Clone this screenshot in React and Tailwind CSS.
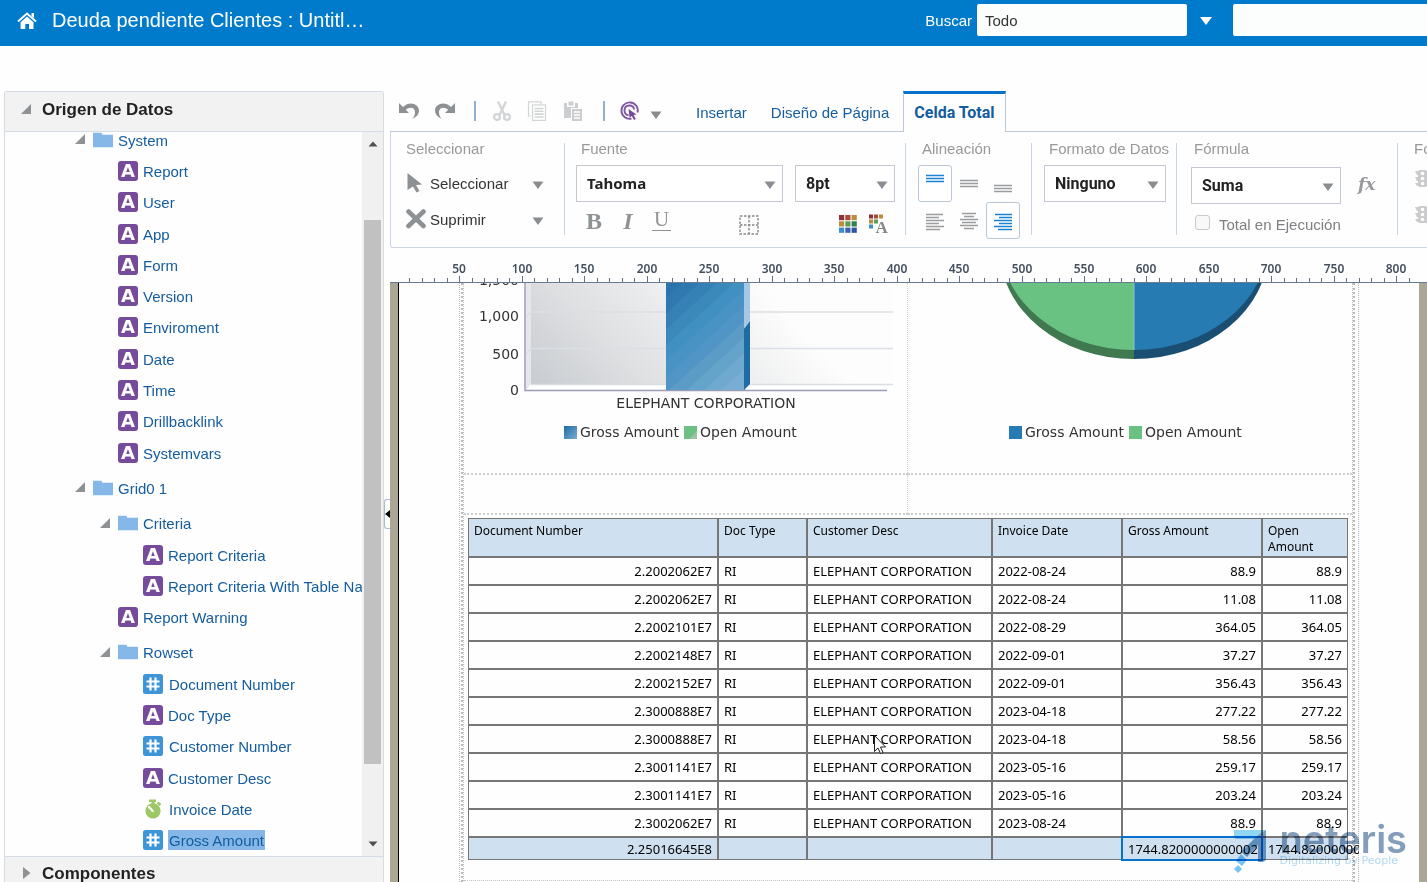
import React from "react";

const tree = [
  { kind: "folder", level: 1, label: "System" },
  { kind: "text", level: 2, label: "Report" },
  { kind: "text", level: 2, label: "User" },
  { kind: "text", level: 2, label: "App" },
  { kind: "text", level: 2, label: "Form" },
  { kind: "text", level: 2, label: "Version" },
  { kind: "text", level: 2, label: "Enviroment" },
  { kind: "text", level: 2, label: "Date" },
  { kind: "text", level: 2, label: "Time" },
  { kind: "text", level: 2, label: "Drillbacklink" },
  { kind: "text", level: 2, label: "Systemvars" },
  { kind: "folder", level: 1, label: "Grid0 1" },
  { kind: "folder", level: 2, label: "Criteria" },
  { kind: "text", level: 3, label: "Report Criteria" },
  { kind: "text", level: 3, label: "Report Criteria With Table Na" },
  { kind: "text", level: 2, label: "Report Warning" },
  { kind: "folder", level: 2, label: "Rowset" },
  { kind: "number", level: 3, label: "Document Number" },
  { kind: "text", level: 3, label: "Doc Type" },
  { kind: "number", level: 3, label: "Customer Number" },
  { kind: "text", level: 3, label: "Customer Desc" },
  { kind: "date", level: 3, label: "Invoice Date" },
  { kind: "number", level: 3, label: "Gross Amount", selected: true },
];

const folderIndent = { 1: "pl-[70px]", 2: "pl-[95px]" };
const leafIndent = { 2: "pl-[113px]", 3: "pl-[138px]" };

const rows = [
  ["2.2002062E7", "2022-08-24", "88.9"],
  ["2.2002062E7", "2022-08-24", "11.08"],
  ["2.2002101E7", "2022-08-29", "364.05"],
  ["2.2002148E7", "2022-09-01", "37.27"],
  ["2.2002152E7", "2022-09-01", "356.43"],
  ["2.3000888E7", "2023-04-18", "277.22"],
  ["2.3000888E7", "2023-04-18", "58.56"],
  ["2.3001141E7", "2023-05-16", "259.17"],
  ["2.3001141E7", "2023-05-16", "203.24"],
  ["2.3002062E7", "2023-08-24", "88.9"],
];

function Caret({ className = "" }) {
  return (
    <svg className={"shrink-0 " + className} width="12" height="9" viewBox="0 0 12 9" aria-hidden="true">
      <path d="M0.5 0.5H11.5L6 8Z" fill="#8a8d90" />
    </svg>
  );
}

function OpenToggle() {
  return (
    <svg className="shrink-0" width="11" height="11" viewBox="0 0 11 11" aria-hidden="true">
      <path d="M10 0V10H0Z" fill="#8f9294" />
    </svg>
  );
}

function KindIcon({ kind }) {
  if (kind === "folder")
    return (
      <svg className="shrink-0" width="20" height="16" viewBox="0 0 20 16" aria-hidden="true">
        <path d="M0 0.8H8.5L9.3 2.8H20V15.3H0Z" fill="#85b8e8" />
      </svg>
    );
  if (kind === "text")
    return (
      <span
        aria-hidden="true"
        className="flex size-5 shrink-0 items-center justify-center rounded-[3px] bg-[#774b9b] font-['DejaVu_Sans',sans-serif] text-[18px] leading-5 font-bold text-white"
      >
        A
      </span>
    );
  if (kind === "number")
    return (
      <svg className="shrink-0" width="20" height="20" viewBox="0 0 20 20" aria-hidden="true">
        <rect width="20" height="20" rx="2.5" fill="#3d94d6" />
        <path d="M7.5 3.500V16.500M12.500 3.500V16.500M3.500 7.500H16.500M3.500 12.500H16.500" stroke="#fff" strokeWidth="2.2" />
      </svg>
    );
  return (
    <svg className="shrink-0" width="20" height="20" viewBox="0 0 20 20" aria-hidden="true">
      <path d="M6 0.5H13V3H11.5V5H8.5V3H6Z" fill="#9cc765" />
      <circle cx="10" cy="11.8" r="7.6" fill="#9cc765" />
      <path d="M14.5 3.5L17.5 6" stroke="#9cc765" strokeWidth="2.4" />
      <path d="M6 8L9.8 12" stroke="#fff" strokeWidth="2.4" strokeLinecap="round" />
    </svg>
  );
}

function TreeRow({ item, first }) {
  const folder = item.kind === "folder";
  const size = first ? "basis-[31px]" : folder ? "basis-[35px] pt-1" : "basis-[31px]";
  const indent = folder ? folderIndent[item.level] : leafIndent[item.level];
  const gap = item.kind === "number" || item.kind === "date" ? "ml-[5px]" : "ml-1";
  return (
    <li className={"flex shrink-0 grow items-center " + size + " " + indent}>
      {folder && (
        <button type="button" aria-label={"Contraer " + item.label} className="mr-[7px]">
          <OpenToggle />
        </button>
      )}
      <KindIcon kind={item.kind} />
      <a
        href="#"
        className={gap + " px-px pt-0.5 leading-[18px] whitespace-nowrap " + (item.selected ? "bg-[#85b8e8]" : "")}
      >
        {item.label}
      </a>
    </li>
  );
}

function Sidebar() {
  return (
    <aside className="ml-1 flex w-[380px] shrink-0 flex-col rounded-t-[3px] border border-b-0 border-[#d6dce6]">
      <h2 className="flex h-[39px] shrink-0 items-center bg-[#f2f2f2] pb-1 pl-4">
        <OpenToggle />
        <button type="button" className="ml-[10px] text-[17px] font-bold text-[#222]">
          Origen de Datos
        </button>
      </h2>
      <div className="flex min-h-0 flex-1 overflow-hidden border-t border-[#d6dce6]">
        <ul className="-mt-2 flex min-w-0 flex-1 flex-col overflow-hidden text-[15px] text-[#145c9e]">
          {tree.map((item, i) => (
            <TreeRow key={item.label} item={item} first={i === 0} />
          ))}
        </ul>
        <div className="flex w-[21px] shrink-0 flex-col items-center bg-[#f0f0f0] py-[9px]">
          <svg width="10" height="6" viewBox="0 0 10 6" aria-hidden="true">
            <path d="M5 0.5L9.5 5.5H0.5Z" fill="#505050" />
          </svg>
          <div className="mt-[73px] mb-[77px] w-[17px] flex-1 bg-[#c1c1c1]" />
          <svg width="10" height="6" viewBox="0 0 10 6" aria-hidden="true">
            <path d="M5 5.5L9.5 0.5H0.5Z" fill="#505050" />
          </svg>
        </div>
      </div>
      <h2 className="flex h-[26px] shrink-0 items-start border-t border-[#d6dce6] bg-[#f2f2f2] pl-[18px]">
        <svg className="mt-[10px]" width="8" height="12" viewBox="0 0 8 12" aria-hidden="true">
          <path d="M0 0L7.5 6L0 12Z" fill="#8f9294" />
        </svg>
        <button type="button" className="mt-[5px] ml-[11px] text-[17px] leading-6 font-bold text-[#222]">
          Componentes
        </button>
      </h2>
    </aside>
  );
}

function IconButton({ label, className = "", children }) {
  return (
    <button type="button" aria-label={label} className={"flex shrink-0 items-center justify-center " + className}>
      {children}
    </button>
  );
}

const undoPath =
  "M0 2L0 12H10L6.8 8.8C10.5 5.6 16 6 16 11.2C16 13.8 15 16 13.2 18C17.6 16 20 13.2 20 9.8C20 3 10.5 -0.6 4 6Z";

function TopBar() {
  return (
    <div className="flex h-[41px] shrink-0 items-end text-[15px] text-[#145c9e]">
      <div className="flex min-w-0 flex-1 self-stretch border-b border-[#bcc8d6]">
        <div className="flex h-10 items-center pl-[9px]">
          <IconButton label="Deshacer">
            <svg width="20" height="20" viewBox="0 0 20 20"><path d={undoPath} fill="#8d9194" /></svg>
          </IconButton>
          <IconButton label="Rehacer" className="ml-4">
            <svg width="20" height="20" viewBox="0 0 20 20">
              <path d={undoPath} fill="#8d9194" transform="matrix(-1 0 0 1 20 0)" />
            </svg>
          </IconButton>
          <span className="ml-[19px] h-5 w-0.5 bg-[#8fb0cf]" />
          <IconButton label="Cortar" className="ml-4">
            <svg width="20" height="20" viewBox="0 0 20 20" fill="none" stroke="#d3d5d6">
              <path d="M6 0.5L12.5 14M14 0.5L7.5 14" strokeWidth="2.4" />
              <circle cx="5" cy="16" r="2.9" strokeWidth="2.3" />
              <circle cx="15" cy="16" r="2.9" strokeWidth="2.3" />
            </svg>
          </IconButton>
          <IconButton label="Copiar" className="ml-[15px]">
            <svg width="20" height="20" viewBox="0 0 20 20" fill="none" stroke="#d3d5d6">
              <path d="M4 15H1.5V0.8H14V3.5" strokeWidth="1.2" />
              <rect x="5.5" y="4" width="13" height="15.4" strokeWidth="1.2" />
              <path d="M7.5 7.5H16.5M7.5 10.3H16.5M7.5 13.1H16.5M7.5 16H16.5" strokeWidth="1.6" />
            </svg>
          </IconButton>
          <IconButton label="Pegar" className="ml-4">
            <svg width="20" height="20" viewBox="0 0 20 20">
              <path d="M1 2H4V6H12V2H15V7H8V17H1Z" fill="#cbcdce" />
              <rect x="5.5" y="0.5" width="5" height="4" fill="#cbcdce" />
              <rect x="9" y="8" width="10" height="12" fill="#cbcdce" />
              <path d="M11 11H17M11 14H17M11 17H17" stroke="#fff" strokeWidth="1.3" />
            </svg>
          </IconButton>
          <span className="ml-5 h-5 w-0.5 bg-[#8fb0cf]" />
          <IconButton label="Interactividad" className="ml-[15px]">
            <svg width="20" height="20" viewBox="0 0 20 20" fill="none" stroke="#8156a3">
              <path d="M11.500 17.600A8.2 8.2 0 1 1 17.6 11.500" strokeWidth="1.9" />
              <path d="M8.500 14.200A4.9 4.9 0 1 1 14.200 8.500" strokeWidth="1.9" />
              <path d="M8.500 8L16.500 13.500L13.6 14L15.8 18L14 19L11.8 15L9.6 17Z" fill="#774b9b" stroke="none" />
            </svg>
          </IconButton>
          <IconButton label="Opciones" className="mt-2 ml-[10px]">
            <Caret />
          </IconButton>
          <a href="#" className="mt-1 ml-[34px]">Insertar</a>
          <a href="#" className="mt-1 ml-6 whitespace-nowrap">Diseño de Página</a>
          <a
            href="#"
            className="z-10 ml-[14px] flex h-[41px] items-center self-start border-x border-t-[3px] border-x-[#bcc8d6] border-t-[#0572ce] bg-[#fefefe] px-[10px] font-[Roboto,sans-serif] text-base font-bold whitespace-nowrap"
          >
            Celda Total
          </a>
        </div>
      </div>
    </div>
  );
}

function Select({ label, value, className }) {
  return (
    <span className={"relative flex h-[37px] shrink-0 " + className}>
      <select
        aria-label={label}
        defaultValue={value}
        className="w-full appearance-none border border-[#c4c8d4] bg-white pl-[10px] font-bold text-[#222] outline-none"
      >
        <option>{value}</option>
      </select>
      <Caret className="pointer-events-none absolute top-4 right-[7px]" />
    </span>
  );
}

function Group({ label, labelClass, className = "", children }) {
  return (
    <section className={"shrink-0 " + className}>
      <h3 className={"mb-[10px] h-3 leading-3 whitespace-nowrap text-[#999] " + labelClass}>{label}</h3>
      {children}
    </section>
  );
}

function Divider() {
  return <div className="mb-3 w-px shrink-0 bg-[#c9d4e2]" />;
}

function AlignButton({ label, active, lines }) {
  return (
    <button
      type="button"
      aria-label={label}
      className={
        "flex h-[37px] w-[34px] items-center justify-center rounded-[3px] border " +
        (active ? "border-[#b9c6d3] bg-white" : "border-transparent")
      }
    >
      <svg width="18" height="20" viewBox="0 0 18 20" fill="none" strokeWidth="1.5" stroke={active ? "#1b82d2" : "#9a9d9f"}>
        <path d={lines} />
      </svg>
    </button>
  );
}

function ListButton({ icon, label }) {
  return (
    <div className="flex h-9 items-center">
      <button type="button" className="flex flex-1 items-center gap-1 text-[#333]">
        {icon}
        <span className="pt-0.5">{label}</span>
      </button>
      <button type="button" aria-label={label + ": opciones"} className="mt-1 mr-5">
        <Caret />
      </button>
    </div>
  );
}

const swatches = [
  ["#8e3037", "#a94a36", "#b98d3c"],
  ["#b98d3c", "#5f9a58", "#2f7f4f"],
  ["#3a8fc8", "#3a62b0", "#2f54a0"],
];

function TrafficLight({ gear }) {
  return (
    <svg width="20" height="20" viewBox="0 0 20 20" fill="#c9cbcc" aria-hidden="true">
      <path d="M1 2H5V6H3ZM1 8H5V12H3ZM1 14H5V17H3ZM12 2H16L14 6H12ZM12 8H16L14 12H12ZM12 14H16L14 17H12Z" />
      <rect x="4" y="1" width="9" height="17" rx="2" />
      <g fill="#fff">
        <circle cx="8.5" cy="4.5" r="1.8" />
        <circle cx="8.5" cy="9.5" r="1.8" />
        <circle cx="8.5" cy="14.5" r="1.8" />
      </g>
      {gear && <circle cx="15" cy="15" r="3" fill="none" stroke="#c9cbcc" strokeWidth="2" />}
    </svg>
  );
}

function Ribbon() {
  return (
    <div className="flex h-[116px] shrink-0 overflow-hidden rounded-bl-[3px] border-b border-l border-[#ccd6e4] pt-[11px] text-[15px]">
      <Group label="Seleccionar" labelClass="" className="w-[173px] pl-[15px]">
        <ListButton
          label="Seleccionar"
          icon={
            <svg width="20" height="20" viewBox="0 0 20 20" aria-hidden="true">
              <path d="M1.5 0L16 11.5L10 12L13.5 18L10.5 19.5L7 13.5L1.5 17Z" fill="#8d9194" />
            </svg>
          }
        />
        <ListButton
          label="Suprimir"
          icon={
            <svg width="20" height="20" viewBox="0 0 20 20" aria-hidden="true">
              <path d="M2.5 2.5L17.5 17M17.5 2.5L2.5 17" stroke="#8d9194" strokeWidth="4.6" strokeLinecap="round" />
            </svg>
          }
        />
      </Group>
      <Divider />
      <Group label="Fuente" labelClass="pl-[5px]" className="w-[340px] pl-[11px]">
        <div className="flex gap-3">
          <Select label="Fuente" value="Tahoma" className="w-[207px] font-['Noto_Sans',sans-serif]" />
          <Select label="Tamaño" value="8pt" className="w-[100px] font-[Roboto,sans-serif] text-base" />
        </div>
        <div className="flex h-[38px] items-center pl-2 font-['Liberation_Serif',serif] text-2xl leading-6 text-[#909396]">
          <IconButton label="Negrita" className="w-5"><b>B</b></IconButton>
          <IconButton label="Cursiva" className="ml-[14px] w-5"><b className="italic">I</b></IconButton>
          <IconButton label="Subrayado" className="ml-[14px] w-[19px] border-b border-[#909396] text-[21px]">
            <span className="h-[19px] leading-[17px]">U</span>
          </IconButton>
          <IconButton label="Bordes" className="mt-[7px] ml-[68px]">
            <svg width="20" height="20" viewBox="0 0 20 20" fill="none" stroke="#85888b" strokeWidth="1.4" strokeDasharray="2.5 1.5">
              <rect x="1" y="1" width="18" height="18" />
              <path d="M10 1V19M1 10H19" />
            </svg>
          </IconButton>
          <IconButton label="Color de fondo" className="mt-[5px] ml-20">
            <svg width="18" height="18" viewBox="0 0 18 18">
              {swatches.map((line, y) =>
                line.map((c, x) => <rect key={x + "-" + y} x={x * 6.3} y={y * 6.3} width="5.2" height="5.2" fill={c} />)
              )}
            </svg>
          </IconButton>
          <IconButton label="Color de texto" className="mt-[5px] ml-3">
            <svg width="19" height="19" viewBox="0 0 19 19">
              {swatches.map((line, y) =>
                line
                  .filter((c, x) => x + y < 3)
                  .map((c, x) => <rect key={x + "-" + y} x={x * 5} y={0.5 + y * 5} width="4" height="4" fill={c} />)
              )}
              <text x="6.500" y="18.500" fontSize="17" fontWeight="bold" fontFamily="Liberation Serif, serif" fill="#85888b" stroke="#fff" strokeWidth="2" paintOrder="stroke">
                A
              </text>
            </svg>
          </IconButton>
        </div>
      </Group>
      <Divider />
      <Group label="Alineación" labelClass="pl-1" className="w-[125px] pl-[12px]">
        <div className="flex">
          <AlignButton label="Arriba" active lines="M0 1.500H18M0 4.500H18M0 7.500H18" />
          <AlignButton label="Medio" lines="M0 6.500H18M0 9.500H18M0 12.500H18" />
          <AlignButton label="Abajo" lines="M0 11.500H18M0 14.500H18M0 17.500H18" />
        </div>
        <div className="flex">
          <AlignButton label="Izquierda" lines="M0 3.500H17M0 6.500H13M0 9.500H18M0 12.500H13M0 15.500H18M0 18.500H14" />
          <AlignButton label="Centro" lines="M2 2.500H16M4 5.500H14M0 8.500H18M2 11.500H16M0 14.500H18M4 17.500H14" />
          <AlignButton label="Derecha" active lines="M1 3.500H18M5 6.500H18M0 9.500H18M5 12.500H18M0 15.500H18M4 18.500H18" />
        </div>
      </Group>
      <Divider />
      <Group label="Formato de Datos" labelClass="pl-[5px]" className="w-[144px] pl-[12px]">
        <Select label="Formato de Datos" value="Ninguno" className="w-[122px] font-[Roboto,sans-serif] text-base" />
      </Group>
      <Divider />
      <Group label="Fórmula" labelClass="pl-[3px]" className="w-[220px] pl-[14px]">
        <div className="mt-3 flex items-center">
          <Select label="Fórmula" value="Suma" className="w-[150px] font-[Roboto,sans-serif] text-base" />
          <button
            type="button"
            aria-label="Editor de fórmulas"
            className="ml-[17px] pb-1 font-['DejaVu_Serif',serif] text-[17px] leading-6 font-bold text-[#97999c] italic"
          >
            fx
          </button>
        </div>
        <label className="mt-[9px] flex items-center gap-[9px] pl-1 leading-5 whitespace-nowrap text-[#7d7f82]">
          <input
            type="checkbox"
            className="mb-1 size-[15px] shrink-0 appearance-none rounded-[3px] border border-[#c9c9c9] bg-[#f8f8f8]"
          />
          <span className="pt-0.5">Total en Ejecución</span>
        </label>
      </Group>
      <Divider />
      <Group label="Formato Condicional" labelClass="" className="w-[160px] pl-[16px]">
        <button type="button" aria-label="Resaltar" className="mt-[14px] block"><TrafficLight /></button>
        <button type="button" aria-label="Gestionar formatos" className="mt-4 block"><TrafficLight gear /></button>
      </Group>
    </div>
  );
}

function Ruler() {
  const ticks = Array.from({ length: 81 }, (_, i) => (i + 1) * 10);
  return (
    <svg className="block h-[35px] w-full shrink-0" aria-hidden="true">
      {ticks.map((t) => {
        const x = Math.round(7 + t * 1.249);
        const major = t % 50 === 0;
        return (
          <g key={t}>
            <rect x={x} y={major ? 28 : 30} width="1" height={major ? 6 : 4} fill="#5f6f86" />
            {major && (
              <text x={x} y="25" textAnchor="middle" fontSize="12" fontWeight="600" fontFamily="Noto Sans, sans-serif" fill="#45505f">
                {t}
              </text>
            )}
          </g>
        );
      })}
      <rect x="0" y="34" width="100%" height="1" fill="#6b7a93" />
    </svg>
  );
}

const chartText = { fontFamily: "DejaVu Sans, sans-serif", fontSize: 14, fill: "#333" };

function BarChart() {
  const bands = ["#1f6ba3", "#2974aa", "#3079b0", "#3580b5", "#3b88bb", "#4190c2", "#4893c3", "#5095c6", "#5a9cc6", "#65a4ca", "#70a9cf", "#7aadd3"];
  return (
    <svg width="440" height="191" viewBox="0 0 440 191" role="img" aria-label="Gross Amount y Open Amount por cliente">
      <defs>
        <linearGradient id="wall" gradientUnits="userSpaceOnUse" x1="66" y1="101" x2="240" y2="-60">
          <stop offset="0" stopColor="#c8cbd0" />
          <stop offset="0.35" stopColor="#dddfe1" />
          <stop offset="1" stopColor="#fdfdfd" />
        </linearGradient>
        <linearGradient id="bar" gradientUnits="userSpaceOnUse" x1="195" y1="-10" x2="290" y2="94">
          {bands.map((c, i) => [
            <stop key={i + "a"} offset={i / 12} stopColor={c} />,
            <stop key={i + "b"} offset={(i + 0.9) / 12} stopColor={c} />,
          ])}
        </linearGradient>
        <linearGradient id="barKey" x1="0" y1="0" x2="1" y2="1">
          <stop offset="0" stopColor="#1f6ba3" />
          <stop offset="1" stopColor="#7aadd3" />
        </linearGradient>
      </defs>
      <path d="M67 0H429V101H67Z" fill="url(#wall)" />
      <path d="M62 0H67V101L62 107Z" fill="#e6e7ea" />
      <g fill="none" stroke="#dcdee6" strokeWidth="1.400">
        <path d="M62 34.500L67 29H429M62 71L67 65.500H429M67 101.500H429" />
      </g>
      <path d="M61 0V107.500H423" fill="none" stroke="#9c9cb8" strokeWidth="1.500" />
      <rect x="202" y="0" width="79" height="107" fill="url(#bar)" />
      <path d="M280 0H286V38L280 46Z" fill="#a6c8e6" />
      <path d="M280 46L286 38V101L280 107Z" fill="#1f6ba3" />
      <g {...chartText} textAnchor="end">
        <text x="55" y="2">1,500</text>
        <text x="55" y="38">1,000</text>
        <text x="55" y="76">500</text>
        <text x="55" y="112">0</text>
      </g>
      <text {...chartText} x="242" y="125" textAnchor="middle">ELEPHANT CORPORATION</text>
      <rect x="100" y="143" width="13" height="13" fill="url(#barKey)" />
      <text {...chartText} x="116" y="154">Gross Amount</text>
      <rect x="220" y="143" width="13" height="13" fill="#6cc084" />
      <path d="M233 148V156H225Z" fill="#9bc3a8" />
      <text {...chartText} x="236" y="154">Open Amount</text>
    </svg>
  );
}

function PieChart() {
  return (
    <svg width="440" height="191" viewBox="0 0 440 191" role="img" aria-label="Gross Amount y Open Amount">
      <path d="M92 -33A134 109 0 0 0 226 76V-33Z" fill="#40784f" />
      <path d="M360 -33A134 109 0 0 1 226 76V-33Z" fill="#1a4e72" />
      <path d="M92 -42A134 109 0 0 0 226 67V-42Z" fill="#69c182" />
      <path d="M360 -42A134 109 0 0 1 226 67V-42Z" fill="#267bb3" />
      <path d="M226 0V67" stroke="#8fc6c4" />
      <rect x="101" y="143" width="13" height="13" fill="#267bb3" />
      <text {...chartText} x="117" y="154">Gross Amount</text>
      <rect x="221" y="143" width="13" height="13" fill="#69c182" />
      <text {...chartText} x="237" y="154">Open Amount</text>
    </svg>
  );
}

const cell = "border border-[#767676] px-[5px] py-0";
const shaded = cell + " bg-[#cfe0f0]";

function ReportTable() {
  return (
    <table className="w-full table-fixed border-separate border-spacing-0 font-['Noto_Sans',sans-serif] text-[13px] leading-4 text-black">
      <colgroup>
        <col className="w-[250px]" />
        <col className="w-[89px]" />
        <col className="w-[185px]" />
        <col className="w-[130px]" />
        <col className="w-[140px]" />
        <col />
      </colgroup>
      <thead>
        <tr className="h-[39px] text-left align-top text-xs leading-4">
          {["Document Number", "Doc Type", "Customer Desc", "Invoice Date", "Gross Amount", "Open Amount"].map((h) => (
            <th key={h} className={shaded + " pt-1 leading-4 font-normal"}>{h}</th>
          ))}
        </tr>
      </thead>
      <tbody>
        {rows.map(([doc, date, amount], i) => (
          <tr key={i} className="h-7">
            <td className={cell + " text-right"}>{doc}</td>
            <td className={cell}>RI</td>
            <td className={cell + " whitespace-nowrap"}>ELEPHANT CORPORATION</td>
            <td className={cell}>{date}</td>
            <td className={cell + " text-right"}>{amount}</td>
            <td className={cell + " text-right"}>{amount}</td>
          </tr>
        ))}
      </tbody>
      <tfoot>
        <tr className="h-[23px]">
          <td className={shaded + " text-right"}>2.25016645E8</td>
          <td className={shaded} />
          <td className={shaded} />
          <td className={shaded} />
          <td className={shaded + " text-right outline-2 -outline-offset-1 outline-[#0572ce]"}>1744.8200000000002</td>
          <td className={shaded}>
            <div className="w-[91px] overflow-hidden">1744.82000000</div>
          </td>
        </tr>
      </tfoot>
    </table>
  );
}

function Watermark() {
  return (
    <div className="pointer-events-none absolute right-5 bottom-[9px] flex items-end gap-3 opacity-85 mix-blend-multiply">
      <svg width="33" height="43" viewBox="0 0 33 43" aria-hidden="true">
        <path d="M0 0H32L24 9H3Q0 9 0 6Z" fill="#7fd0f5" />
        <path d="M32 0V28Q32 32 28 32H24V15L13 27L7 22L24 5Z" fill="#5a92bf" />
        <path d="M7 24L13 30L8 36L2 31Z" fill="#5cbcf0" />
        <path d="M4 35L8 39L4 43L0 39Z" fill="#5cbcf0" />
      </svg>
      <div className="pb-[6px]">
        <div className="font-[Inter,sans-serif] text-[38px] leading-8 font-semibold text-[#6f8db0]">neteris</div>
        <div className="font-['DejaVu_Sans',sans-serif] text-[11px] leading-3 whitespace-nowrap text-[#a9d3ee]">
          Digitalizing by People
        </div>
      </div>
    </div>
  );
}

function Canvas() {
  return (
    <div className="relative min-h-0 flex-1 overflow-hidden bg-[#aba695] px-2">
      <div className="h-full border-l border-black bg-[#fefefe] px-[60px]">
        <div className="h-full border-x border-dotted border-[#b5b5b5] pr-[3px] pl-px">
          <div className="h-full border-x-2 border-dotted border-[#b8b8b8]">
            <div className="grid grid-cols-2 border-x border-dotted border-[#c4c4c4]">
              <div className="h-[192px] border-r border-b-2 border-dotted border-[#cfcfcf]"><BarChart /></div>
              <div className="h-[192px] border-b-2 border-dotted border-[#cfcfcf]"><PieChart /></div>
              <div className="h-10 border-r border-b-2 border-dotted border-[#cfcfcf]" />
              <div className="h-10 border-b-2 border-dotted border-[#cfcfcf]" />
              <div className="col-span-2 border-b border-dotted border-[#c4c4c4] px-1 pt-[3px] pb-5">
                <ReportTable />
              </div>
            </div>
          </div>
        </div>
      </div>
      <Watermark />
      <svg className="absolute top-[452px] left-[484px]" width="13" height="20" viewBox="0 0 13 20" aria-hidden="true">
        <path d="M0.500 0.500V16.500L4 13L6.500 18.500L9 17.500L6.500 12H11.500Z" fill="#fff" stroke="#222" />
      </svg>
    </div>
  );
}

function Header() {
  return (
    <header className="flex h-[46px] shrink-0 items-center bg-[#007bcb] pb-1.5 text-white">
      <a href="#" aria-label="Inicio" className="mt-0.5 ml-[17px]">
        <svg width="20" height="18" viewBox="0 0 20 18" aria-hidden="true">
          <path d="M1 9.500L10 1.500L19 9.500" fill="none" stroke="#fff" strokeWidth="1.900" />
          <path d="M14.500 1H17V6L14.500 4Z" fill="#fff" />
          <path d="M10 4.500L16.500 10.300V17H12V12H8.300V17H3.600V10.300Z" fill="#fff" />
        </svg>
      </a>
      <h1 className="ml-[15px] text-xl whitespace-nowrap">Deuda pendiente Clientes : Untitl…</h1>
      <form className="ml-auto flex items-center text-[15px]">
        <label htmlFor="scope" className="pt-0.5">Buscar</label>
        <input
          id="scope"
          defaultValue="Todo"
          className="ml-[5px] h-8 w-[210px] rounded-[2px] bg-[#fcfefd] px-2 text-[#333] outline-none"
        />
        <button type="button" aria-label="Mostrar ámbitos" className="mt-0.5 ml-[13px]">
          <svg width="12" height="8" viewBox="0 0 12 8" aria-hidden="true">
            <path d="M0 0H12L6 8Z" fill="#fff" />
          </svg>
        </button>
        <input aria-label="Texto de búsqueda" className="ml-[21px] h-8 w-[194px] rounded-l-[2px] bg-[#fcfefd] px-2 text-[#333] outline-none" />
      </form>
    </header>
  );
}

export default function App() {
  return (
    <div className="flex h-screen flex-col overflow-hidden bg-[#fefefe] font-['Liberation_Sans',Arial,sans-serif]">
      <Header />
      <div className="flex min-h-0 flex-1 pt-[45px]">
        <Sidebar />
        <div className="flex w-1.5 shrink-0 flex-col justify-center pt-[55px]">
          <button type="button" aria-label="Contraer panel" className="flex h-[30px] items-center rounded-l-[3px] border border-r-0 border-[#a9bdd3] bg-white">
            <svg width="5" height="8" viewBox="0 0 5 8" aria-hidden="true">
              <path d="M5 0V8L0 4Z" fill="#000" />
            </svg>
          </button>
        </div>
        <main className="flex min-w-0 flex-1 flex-col">
          <TopBar />
          <Ribbon />
          <Ruler />
          <Canvas />
        </main>
      </div>
    </div>
  );
}
